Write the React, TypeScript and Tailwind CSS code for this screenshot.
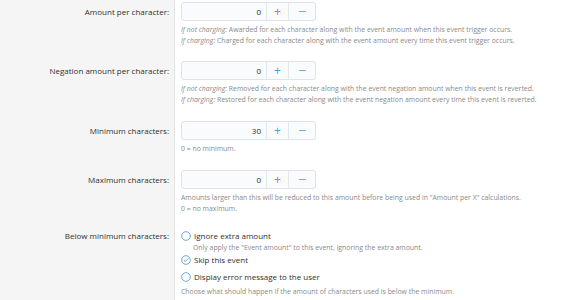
import type { ReactNode } from "react";

const font = { fontFamily: '"Segoe UI", "Open Sans", "Noto Sans", sans-serif' };

function Row({ label, pt, children }: { label: string; pt: string; children: ReactNode }) {
  return (
    <div className="grid grid-cols-[175px_1fr]">
      <div className={`${pt} border-r border-[#e4e4e4] bg-[#f5f5f5] pr-[5px] text-right`}>
        <span className="block text-[8px] leading-[19px] text-[#303030]">{label}</span>
      </div>
      <div className={`${pt} pl-[6px]`}>{children}</div>
    </div>
  );
}

function Spinner({ value }: { value: string }) {
  return (
    <div className="flex h-[19px] w-[135px] rounded-[3px] border border-[#dce3ea] bg-[#f9fbfd]">
      <div className="flex w-[85px] items-center justify-end border-r border-[#e3e8ee] pr-[5px] text-[8px] text-[#2a2a2a]">
        {value}
      </div>
      <div className="flex w-[22px] items-center justify-center border-r border-[#e3e8ee] text-[12px] leading-none text-[#4a9ee6]">
        +
      </div>
      <div className="flex flex-1 items-center justify-center">
        <span className="block h-[1px] w-[7px] bg-[#6aaee8]" />
      </div>
    </div>
  );
}

function Hint({ children, className = "" }: { children: ReactNode; className?: string }) {
  return <p className={`text-[6.9px] leading-[11px] text-[#8a8a8a] ${className}`}>{children}</p>;
}

function Radio({ checked, label }: { checked?: boolean; label: string }) {
  return (
    <div className="flex h-[12px] items-center gap-[3px]">
      <svg width="10" height="10" viewBox="0 0 10 10" aria-hidden>
        <circle cx="5" cy="5" r="4.3" fill="white" stroke="#5b9fd8" strokeWidth="0.9" />
        {checked && (
          <path d="M3 5.1L4.4 6.4L7 3.7" fill="none" stroke="#6f9cc4" strokeWidth="0.9" strokeLinecap="round" strokeLinejoin="round" />
        )}
      </svg>
      <span className="text-[8px] leading-[12px] text-[#2f2f2f]">{label}</span>
    </div>
  );
}

export default function App() {
  return (
    <div className="h-[300px] w-[574px] overflow-hidden bg-white" style={font}>
      <Row label="Amount per character:" pt="pt-[2px]">
        <Spinner value="0" />
        <Hint className="mt-[3px]">
          <i>If not charging:</i> Awarded for each character along with the event amount when this event trigger occurs.
        </Hint>
        <Hint>
          <i>If charging:</i> Charged for each character along with the event amount every time this event trigger occurs.
        </Hint>
      </Row>
      <Row label="Negation amount per character:" pt="pt-[15px]">
        <Spinner value="0" />
        <Hint className="mt-[3px]">
          <i>If not charging:</i> Removed for each character along with the event negation amount when this event is reverted.
        </Hint>
        <Hint>
          <i>If charging:</i> Restored for each character along with the event negation amount every time this event is reverted.
        </Hint>
      </Row>
      <Row label="Minimum characters:" pt="pt-[16px]">
        <Spinner value="30" />
        <Hint className="mt-[3px]">0 = no minimum.</Hint>
      </Row>
      <Row label="Maximum characters:" pt="pt-[16px]">
        <Spinner value="0" />
        <Hint className="mt-[3px]">
          Amounts larger than this will be reduced to this amount before being used in "Amount per X" calculations.
        </Hint>
        <Hint>0 = no maximum.</Hint>
      </Row>
      <div className="grid grid-cols-[175px_1fr]">
        <div className="border-r border-[#e4e4e4] bg-[#f5f5f5] pt-[16px] pr-[5px] text-right">
          <span className="block text-[8px] leading-[12px] text-[#303030]">Below minimum characters:</span>
          <div className="h-[60px]" />
        </div>
        <div className="pt-[16px] pl-[6px]">
          <Radio label="Ignore extra amount" />
          <Hint className="pl-[12px] leading-[10px]">Only apply the "Event amount" to this event, ignoring the extra amount.</Hint>
          <div className="mt-[1px]">
            <Radio checked label="Skip this event" />
          </div>
          <div className="mt-[5px]">
            <Radio label="Display error message to the user" />
          </div>
          <Hint className="mt-[3px]">Choose what should happen if the amount of characters used is below the minimum.</Hint>
        </div>
      </div>
    </div>
  );
}
